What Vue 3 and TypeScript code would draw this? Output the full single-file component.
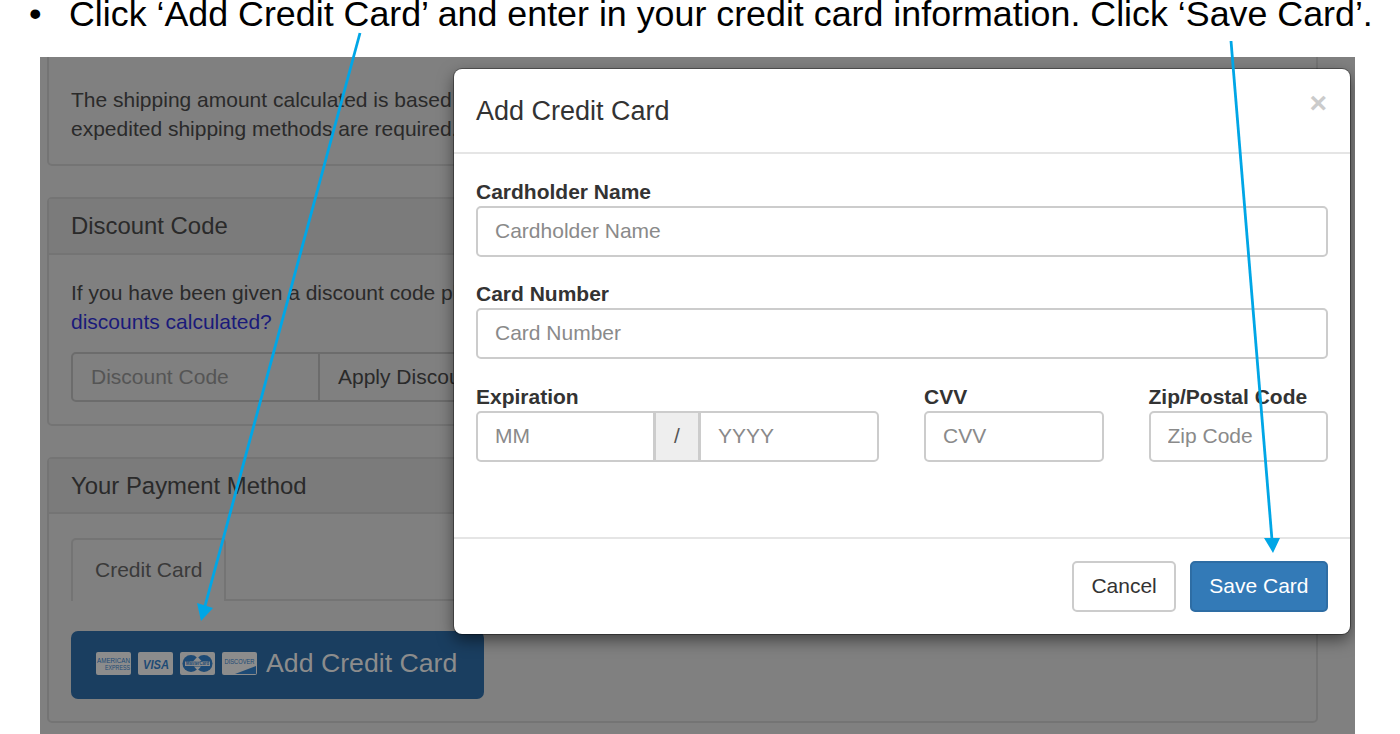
<script setup lang="ts">
interface Arrow {
  x1: number;
  y1: number;
  x2: number;
  y2: number;
  head: string;
}

const arrows: Arrow[] = [
  { x1: 360, y1: 33, x2: 205, y2: 606, head: "197,603 213,608 201,621" },
  { x1: 1231, y1: 41, x2: 1272, y2: 540, head: "1264,538 1280,538 1273,553" },
];
</script>

<template>
  <div class="page">
    <div class="instruction">
      <span class="bullet">•</span>
      <span>Click ‘Add Credit Card’ and enter in your credit card information. Click ‘Save Card’.</span>
    </div>

    <div class="backdrop-area">
      <div class="panel panel-shipping">
        <p>The shipping amount calculated is based on the weight of your order. Please contact us if<br />expedited shipping methods are required.</p>
      </div>

      <div class="panel panel-discount">
        <div class="panel-heading">Discount Code</div>
        <div class="panel-body">
          <p>If you have been given a discount code please enter it below. How are<br /><a>discounts calculated?</a></p>
          <div class="discount-group">
            <div class="discount-input">Discount Code</div>
            <div class="discount-btn">Apply Discount</div>
          </div>
        </div>
      </div>

      <div class="panel panel-payment">
        <div class="panel-heading">Your Payment Method</div>
        <div class="panel-body">
          <div class="tabs">
            <div class="tab">Credit Card</div>
          </div>
          <div class="add-card">
            <svg class="card-icons" width="162" height="24" viewBox="0 0 162 24">
              <!-- amex -->
              <rect x="0" y="0" width="35" height="23" rx="2" fill="#8c8c8c" />
              <text x="1" y="10.500" class="amex" textLength="33" lengthAdjust="spacingAndGlyphs">AMERICAN</text>
              <text x="9" y="18" class="amex" textLength="25" lengthAdjust="spacingAndGlyphs">EXPRESS</text>
              <!-- visa -->
              <rect x="42" y="0" width="35" height="23" rx="2" fill="#8c8c8c" />
              <text x="47" y="16.500" class="visa" textLength="26" lengthAdjust="spacingAndGlyphs">VISA</text>
              <!-- mastercard -->
              <rect x="84" y="0" width="35" height="23" rx="2" fill="#8c8c8c" />
              <circle cx="95" cy="11.500" r="8.500" fill="#1d4a75" />
              <circle cx="108" cy="11.500" r="8.500" fill="#1d4a75" />
              <path d="M101.500 4.500 106 9.500h-9zM101.500 18.500l-3.500-4h7z" fill="#8c8c8c" />
              <rect x="89" y="9.500" width="25" height="4.500" fill="#8c8c8c" />
              <text x="90" y="13.300" class="mc" textLength="23" lengthAdjust="spacingAndGlyphs">MasterCard</text>
              <!-- discover -->
              <rect x="126" y="0" width="35" height="23" rx="2" fill="#8c8c8c" />
              <text x="128.500" y="12" class="disc" textLength="30" lengthAdjust="spacingAndGlyphs">DISCOVER</text>
              <path d="M139 22 160 14v8z" fill="#1d4a75" />
            </svg>
            <span>Add Credit Card</span>
          </div>
        </div>
      </div>

      <div class="modal">
        <div class="modal-header">
          <h4>Add Credit Card</h4>
          <span class="close">×</span>
        </div>
        <div class="modal-body">
          <label class="field">
            <span class="label">Cardholder Name</span>
            <input class="control" placeholder="Cardholder Name" />
          </label>
          <label class="field">
            <span class="label">Card Number</span>
            <input class="control" placeholder="Card Number" />
          </label>
          <div class="row">
            <div class="col-exp">
              <span class="label">Expiration</span>
              <div class="exp-group">
                <input class="control exp-left" placeholder="MM" />
                <span class="exp-sep">/</span>
                <input class="control exp-right" placeholder="YYYY" />
              </div>
            </div>
            <div class="col-small">
              <span class="label">CVV</span>
              <input class="control" placeholder="CVV" />
            </div>
            <div class="col-small">
              <span class="label">Zip/Postal Code</span>
              <input class="control" placeholder="Zip Code" />
            </div>
          </div>
        </div>
        <div class="modal-footer">
          <button class="btn btn-default">Cancel</button>
          <button class="btn btn-primary">Save Card</button>
        </div>
      </div>
    </div>

    <svg class="arrows" width="1400" height="734" viewBox="0 0 1400 734">
      <g v-for="(a, i) in arrows" :key="i">
        <line :x1="a.x1" :y1="a.y1" :x2="a.x2" :y2="a.y2" stroke="#00a6e6" stroke-width="2.800" />
        <polygon :points="a.head" fill="#00a6e6" />
      </g>
    </svg>
  </div>
</template>

<style scoped>
.page {
  position: relative;
  width: 1400px;
  height: 734px;
  overflow: hidden;
  background: #fff;
  font-family: "Liberation Sans", Arial, sans-serif;
  color: #2a2a2a;
}

.instruction {
  height: 57px;
  box-sizing: border-box;
  padding: 0 0 0 29px;
  display: flex;
  font-size: 35.800px;
  line-height: 28px;
  color: #000;
  white-space: nowrap;
}

.bullet {
  width: 40px;
  flex-shrink: 0;
}

.backdrop-area {
  position: relative;
  margin-left: 40px;
  width: 1315px;
  height: 677px;
  box-sizing: border-box;
  padding-left: 7px;
  background: #808080;
  font-size: 21px;
  line-height: 29px;
  overflow: hidden;
}

.panel {
  width: 1271px;
  box-sizing: border-box;
  border: 2px solid #747474;
  border-radius: 5px;
}

.panel p {
  margin: 0;
}

.panel-shipping {
  height: 109px;
  padding: 28px 22px 0;
  border-top: none;
  border-radius: 0 0 5px 5px;
}

.panel-discount {
  height: 229px;
  margin-top: 31px;
}

.panel-payment {
  height: 266px;
  margin-top: 31px;
}

.panel-heading {
  height: 56px;
  box-sizing: border-box;
  padding: 12px 22px 0;
  border-bottom: 2px solid #747474;
  background: #7b7b7b;
  font-size: 23.900px;
}

.panel-payment .panel-heading {
  height: 55px;
}

.panel-body {
  padding: 24px 22px 0;
}

.panel-discount .panel-body {
  padding-top: 23px;
}

.panel-body a {
  color: #1a1a7a;
}

.discount-group {
  display: flex;
  width: 480px;
  height: 50px;
  box-sizing: border-box;
  margin-top: 16px;
  border: 2px solid #6c6c6c;
  border-radius: 5px;
}

.discount-input {
  width: 247px;
  box-sizing: border-box;
  padding: 8px 18px;
  border-right: 2px solid #6c6c6c;
  color: #555;
}

.discount-btn {
  padding: 8px 18px;
  white-space: nowrap;
}

.tabs {
  height: 63px;
  box-sizing: border-box;
  border-bottom: 2px solid #747474;
  margin-right: -22px;
}

.tab {
  width: 155px;
  height: 63px;
  box-sizing: border-box;
  padding: 15px 22px 0;
  border: 2px solid #747474;
  border-bottom: none;
  border-radius: 5px 5px 0 0;
  background: #808080;
  color: #3a3a3a;
  white-space: nowrap;
}

.add-card {
  width: 413px;
  height: 68px;
  box-sizing: border-box;
  margin-top: 30px;
  padding: 0 0 3px 25px;
  display: flex;
  align-items: center;
  gap: 8px;
  background: #1a3e60;
  border-radius: 7px;
  font-size: 26.700px;
  color: #8c8c8c;
  white-space: nowrap;
}

.card-icons {
  flex-shrink: 0;
}

.amex {
  font-size: 7.500px;
  fill: #1d4a75;
}

.visa {
  font-size: 13px;
  font-weight: 700;
  font-style: italic;
  fill: #1d4a75;
}

.mc {
  font-size: 4.500px;
  font-weight: 700;
  fill: #1d4a75;
}

.disc {
  font-size: 6.500px;
  fill: #1d4a75;
}

.modal {
  position: absolute;
  left: 414px;
  top: 12px;
  width: 896px;
  height: 565px;
  box-sizing: border-box;
  background: #fff;
  border-radius: 8px;
  box-shadow: 0 0 0 1px rgba(0, 0, 0, 0.35), 0 6px 16px rgba(0, 0, 0, 0.5);
  color: #333;
  font-size: 21px;
  display: flex;
  flex-direction: column;
}

.modal-header {
  height: 85px;
  flex-shrink: 0;
  box-sizing: border-box;
  padding: 0 23px 0 22px;
  border-bottom: 2px solid #e5e5e5;
  display: flex;
  justify-content: space-between;
  align-items: center;
}

.modal-header h4 {
  margin: 0;
  padding-top: 2px;
  font-size: 27px;
  font-weight: 400;
  line-height: 1.1;
}

.close {
  align-self: flex-start;
  margin-top: 19px;
  font-size: 30px;
  font-weight: 700;
  color: #cbcbcb;
  line-height: 1;
}

.modal-body {
  height: 385px;
  flex-shrink: 0;
  box-sizing: border-box;
  padding: 25px 22px 0;
  border-bottom: 2px solid #e5e5e5;
  display: flex;
  flex-direction: column;
  gap: 24px;
}

.field {
  display: block;
}

.label {
  display: block;
  height: 27px;
  font-weight: 700;
  line-height: 25px;
}

.control {
  display: block;
  width: 100%;
  height: 51px;
  box-sizing: border-box;
  padding: 0 17px 2px;
  border: 2px solid #ccc;
  border-radius: 5px;
  outline: none;
  background: #fff;
  font-family: inherit;
  font-size: 21px;
  color: #555;
}

.control::placeholder {
  color: #8a8a8a;
  opacity: 1;
}

.row {
  display: flex;
  gap: 45px;
  margin-top: 1px;
}

.col-exp {
  width: 403px;
}

.col-small {
  width: 180px;
  white-space: nowrap;
}

.exp-group {
  display: flex;
}

.exp-left {
  width: 180px;
  border-right-width: 3px;
  border-radius: 5px 0 0 5px;
}

.exp-sep {
  width: 42px;
  flex-shrink: 0;
  box-sizing: border-box;
  background: #eee;
  border-top: 2px solid #ccc;
  border-bottom: 2px solid #ccc;
  text-align: center;
  line-height: 46px;
  color: #555;
}

.exp-right {
  width: 181px;
  border-left-width: 3px;
  border-radius: 0 5px 5px 0;
}

.modal-footer {
  flex: 1;
  padding: 0 22px;
  display: flex;
  justify-content: flex-end;
  align-items: center;
  gap: 14px;
}

.btn {
  height: 51px;
  box-sizing: border-box;
  padding: 0 17px 2px;
  border: 2px solid #ccc;
  border-radius: 5px;
  background: #fff;
  font-family: inherit;
  font-size: 21px;
  color: #333;
}

.btn-primary {
  padding: 0 17.500px 2px;
  border-color: #2e6da4;
  background: #337ab7;
  color: #fff;
}

.arrows {
  position: absolute;
  left: 0;
  top: 0;
  pointer-events: none;
}
</style>
